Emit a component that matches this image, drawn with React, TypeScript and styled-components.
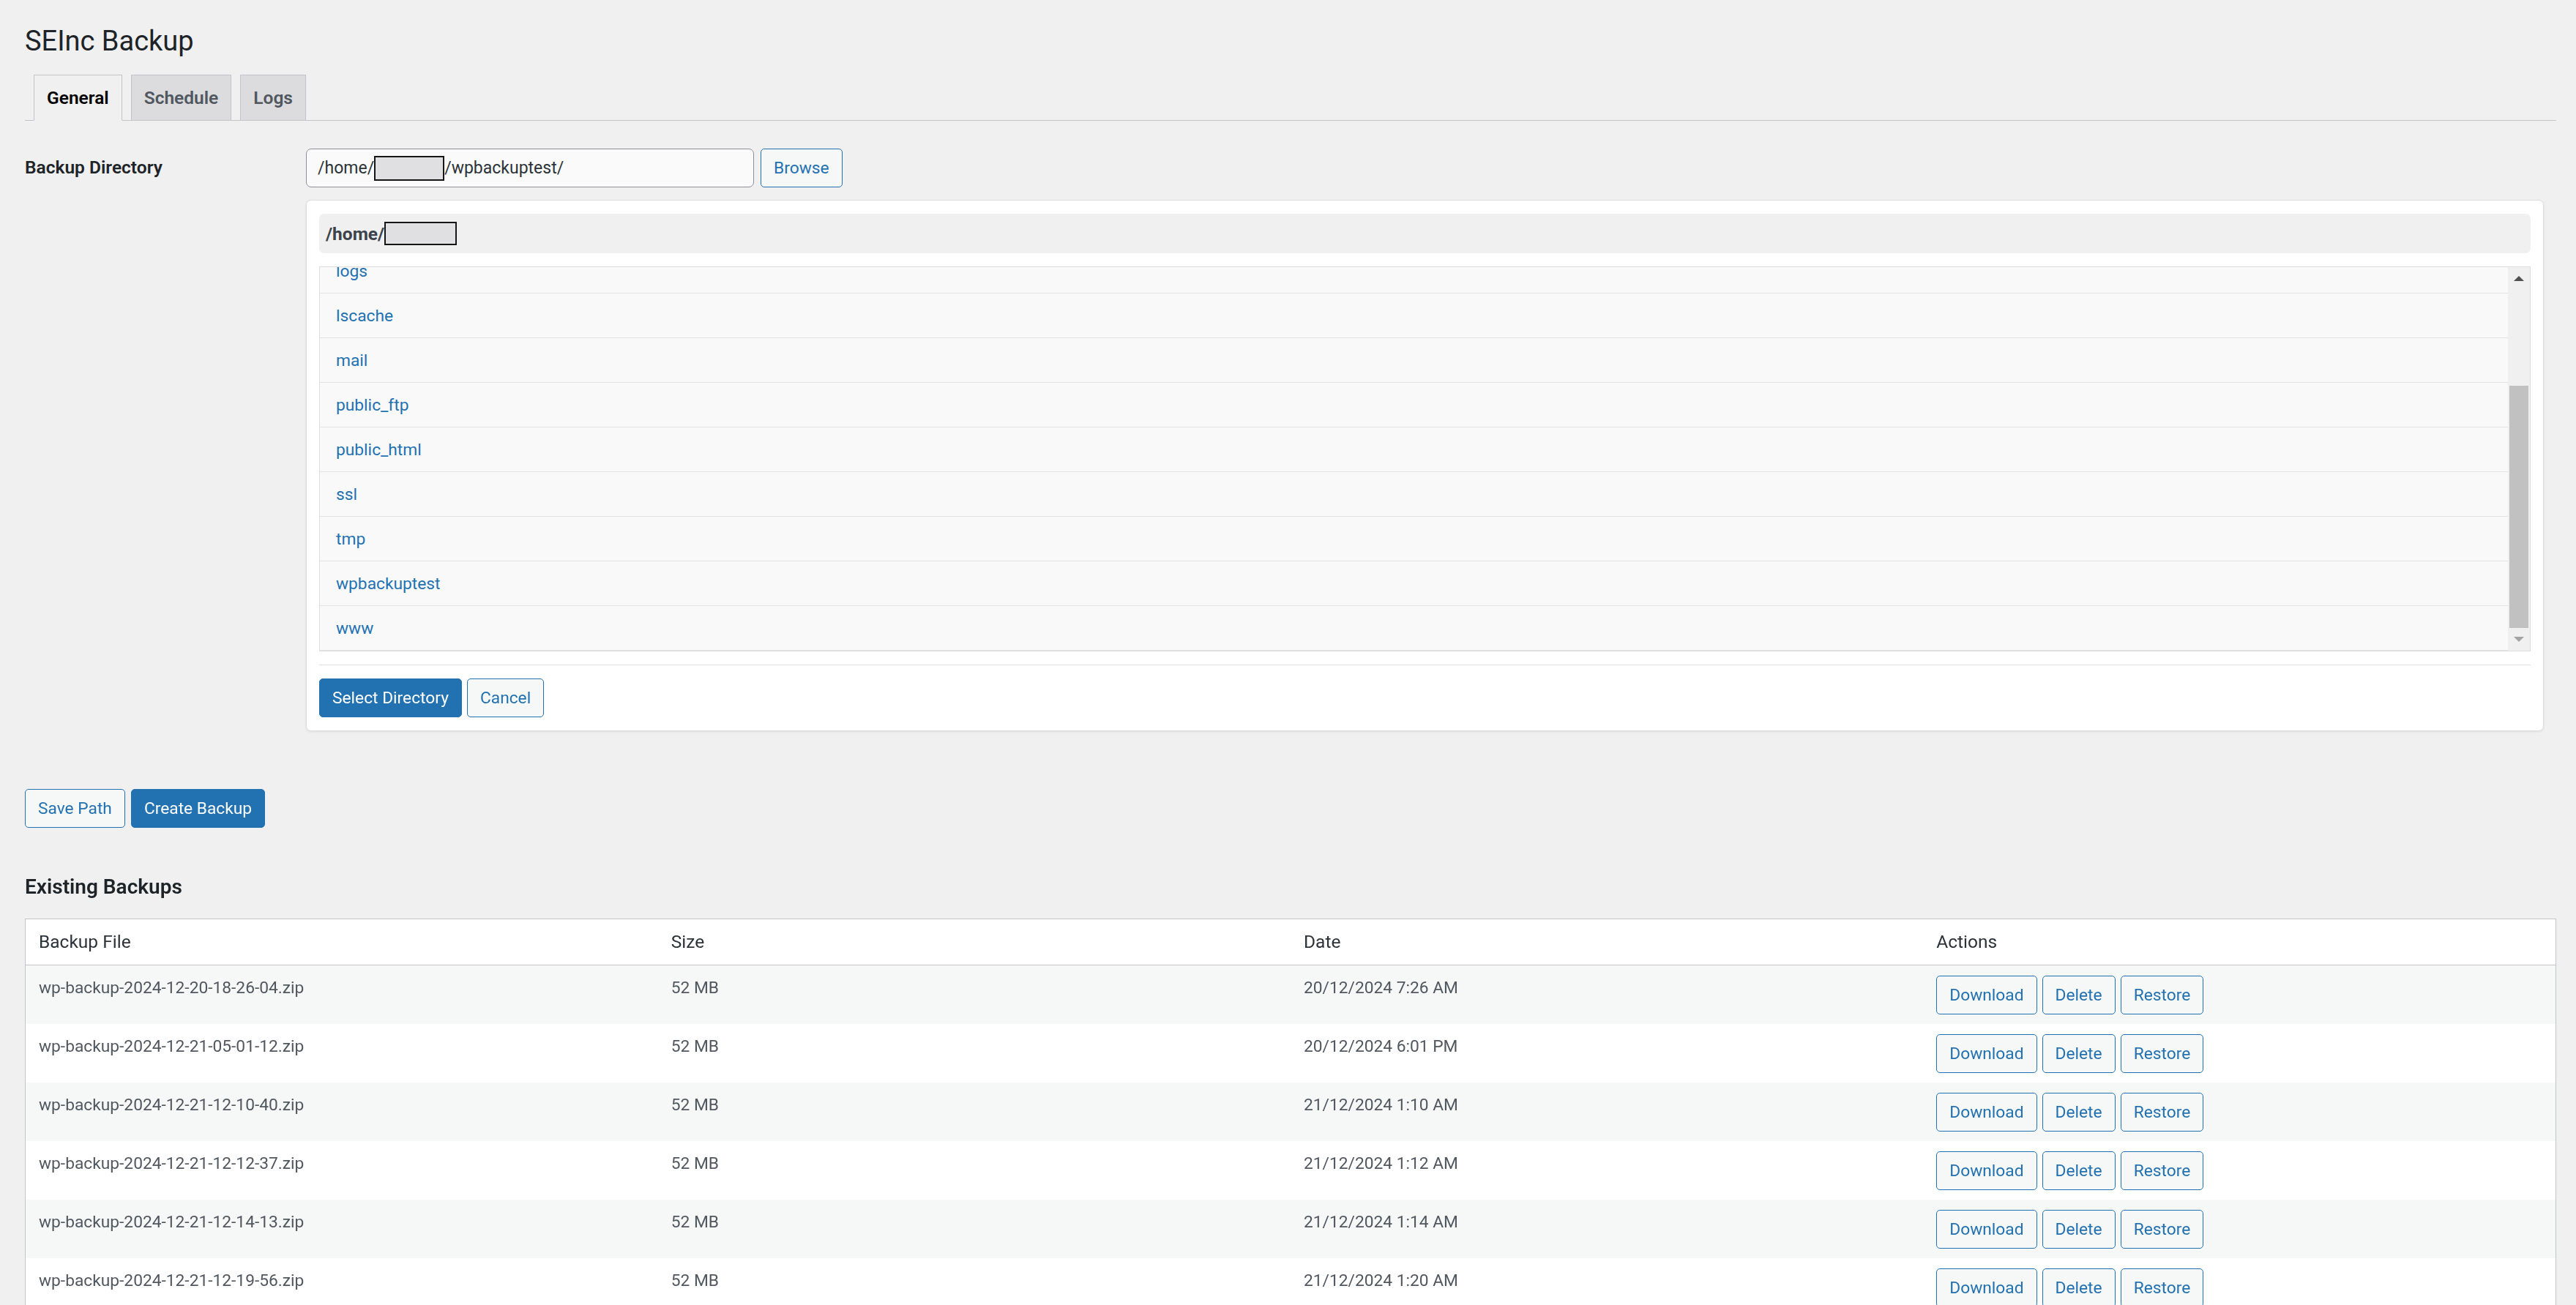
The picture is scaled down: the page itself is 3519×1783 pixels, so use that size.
import React, { useLayoutEffect, useRef } from "react"
import styled, { createGlobalStyle, css } from "styled-components"

const GlobalStyle = createGlobalStyle`
  html, body {
    margin: 0;
    padding: 0;
  }
  body {
    background: #f0f0f1;
    color: #3c434a;
    font-family: -apple-system, BlinkMacSystemFont, "Segoe UI", Roboto, "Helvetica Neue", sans-serif;
    font-size: 22.75px;
  }
  * {
    box-sizing: border-box;
  }
`

const Wrap = styled.div`
  padding: 0 27px 40px 34px;
`

const Title = styled.h1`
  margin: 0;
  padding-top: 32px;
  font-size: 38px;
  font-weight: 400;
  line-height: 49px;
  color: #1d2327;
`

const TabBar = styled.nav`
  display: flex;
  align-items: flex-end;
  margin-top: 21px;
  border-bottom: 1px solid #c3c4c7;
`

const Tab = styled.a<{ $active?: boolean }>`
  margin: 0 0 -1px 12px;
  padding: 9px 17px;
  line-height: 43px;
  font-size: 24.5px;
  font-weight: 600;
  border: 1px solid #c3c4c7;
  background: #dcdcde;
  color: #50575e;
  text-decoration: none;
  cursor: pointer;
  ${(p) =>
    p.$active &&
    css`
      background: #f0f0f1;
      border-bottom-color: #f0f0f1;
      color: #000;
    `}
`

const FormRow = styled.div`
  display: grid;
  grid-template-columns: 367px 1fr;
`

const Label = styled.div`
  padding-top: 48px;
  font-size: 24.5px;
  font-weight: 600;
  line-height: 32px;
  color: #1d2327;
`

const Field = styled.div`
  padding: 38px 17px 0;
`

const InputRow = styled.div`
  display: flex;
  align-items: center;
  gap: 9px;
`

const PathInput = styled.div`
  display: flex;
  align-items: center;
  width: 612px;
  height: 53px;
  padding: 0 15px;
  border: 1px solid #8c8f94;
  border-radius: 7px;
  background: #fafafa;
  color: #2c3338;
  font-size: 23px;
  white-space: nowrap;
`

// grey block hiding the account name in paths
const Redacted = styled.span<{ $w: number; $h: number }>`
  display: inline-block;
  width: ${(p) => p.$w}px;
  height: ${(p) => p.$h}px;
  background: #e0e0e2;
  border: 2px solid #161616;
`

const Button = styled.button<{ $primary?: boolean }>`
  display: inline-flex;
  align-items: center;
  height: 53px;
  padding: 0 17px;
  border: 1px solid #2271b1;
  border-radius: 5px;
  font-family: inherit;
  font-size: 22.75px;
  line-height: 50px;
  white-space: nowrap;
  cursor: pointer;
  background: ${(p) => (p.$primary ? "#2271b1" : "#f6f7f7")};
  color: ${(p) => (p.$primary ? "#fff" : "#2271b1")};
`

const Card = styled.div`
  margin-top: 17px;
  padding: 18px 17px 18px;
  background: #fff;
  border: 1px solid #dcdcde;
  border-radius: 7px;
  box-shadow: 0 1px 3px rgba(0, 0, 0, 0.08);
`

const CurrentPath = styled.div`
  display: flex;
  align-items: center;
  height: 54px;
  padding: 0 9px;
  background: #f0f0f0;
  border-radius: 7px;
  font-size: 24.5px;
  font-weight: 700;
  color: #3c434a;
`

const ListBox = styled.div`
  display: flex;
  height: 526px;
  margin-top: 18px;
  border: 1px solid #dddddd;
  background: #f9f9f9;
`

const ListScroll = styled.div`
  flex: 1;
  overflow-y: auto;
  scrollbar-width: none;
  &::-webkit-scrollbar {
    display: none;
  }
`

const DirRow = styled.div`
  display: flex;
  align-items: center;
  height: 61px;
  padding-left: 22px;
  border-bottom: 1px solid #e3e3e3;
  background: #f9f9f9;
  color: #2271b1;
  font-size: 22.75px;
  cursor: pointer;
`

const ScrollTrack = styled.div`
  display: flex;
  flex-direction: column;
  width: 30px;
  background: #f0f0f0;
`

const ScrollArrow = styled.div<{ $down?: boolean; $dim?: boolean }>`
  display: flex;
  align-items: center;
  justify-content: center;
  height: 31px;
  &::before {
    content: "";
    width: 0;
    height: 0;
    border-left: 7px solid transparent;
    border-right: 7px solid transparent;
    ${(p) =>
      p.$down
        ? css`border-top: 7px solid ${p.$dim ? "#a3a3a3" : "#505050"};`
        : css`border-bottom: 7px solid ${p.$dim ? "#a3a3a3" : "#505050"};`}
  }
`

const ScrollGap = styled.div`
  flex: 1;
`

const ScrollThumb = styled.div`
  margin: 0 2px;
  background: #c1c1c1;
`

const Divider = styled.hr`
  margin: 18px 0 0;
  border: 0;
  border-top: 1px solid #e0e0e0;
`

const ButtonRow = styled.div<{ $gap?: number }>`
  display: flex;
  gap: ${(p) => p.$gap ?? 7}px;
  margin-top: 18px;
`

const SubmitRow = styled(ButtonRow)`
  margin-top: 79px;
`

const SectionTitle = styled.h2`
  margin: 61px 0 0;
  font-size: 28px;
  font-weight: 600;
  line-height: 39px;
  color: #1d2327;
`

const BackupsTable = styled.table`
  width: 100%;
  margin-top: 24px;
  table-layout: fixed;
  border-collapse: collapse;
  border: 1px solid #c3c4c7;
  background: #fff;
`

const HeadCell = styled.th`
  padding: 14px 18px;
  border-bottom: 1px solid #c3c4c7;
  font-size: 24.5px;
  font-weight: 400;
  line-height: 34px;
  text-align: left;
  color: #2c3338;
`

const BodyRow = styled.tr`
  &:nth-child(odd) {
    background: #f6f7f7;
  }
`

const Cell = styled.td`
  padding: 14px 18px 13px;
  vertical-align: top;
  font-size: 22.75px;
  line-height: 34px;
  color: #50575e;
`

const dirs = [
  "cache",
  "etc",
  "lsphp",
  "logs",
  "lscache",
  "mail",
  "public_ftp",
  "public_html",
  "ssl",
  "tmp",
  "wpbackuptest",
  "www",
]

const backups = [
  { file: "wp-backup-2024-12-20-18-26-04.zip", size: "52 MB", date: "20/12/2024 7:26 AM" },
  { file: "wp-backup-2024-12-21-05-01-12.zip", size: "52 MB", date: "20/12/2024 6:01 PM" },
  { file: "wp-backup-2024-12-21-12-10-40.zip", size: "52 MB", date: "21/12/2024 1:10 AM" },
  { file: "wp-backup-2024-12-21-12-12-37.zip", size: "52 MB", date: "21/12/2024 1:12 AM" },
  { file: "wp-backup-2024-12-21-12-14-13.zip", size: "52 MB", date: "21/12/2024 1:14 AM" },
  { file: "wp-backup-2024-12-21-12-19-56.zip", size: "52 MB", date: "21/12/2024 1:20 AM" },
]

const ROW_H = 61
const VIEW_H = 524
const ARROW_H = 31

const DirectoryBrowser = () => {
  const listRef = useRef<HTMLDivElement>(null)

  // the list opens scrolled to the end
  useLayoutEffect(() => {
    const el = listRef.current
    if (el) el.scrollTop = el.scrollHeight
  }, [])

  const contentH = dirs.length * ROW_H
  const thumbH = Math.round((VIEW_H / contentH) * (VIEW_H - ARROW_H * 2))

  return (
    <Card>
      <CurrentPath>
        /home/<Redacted $w={99} $h={32} />
      </CurrentPath>
      <ListBox>
        <ListScroll ref={listRef}>
          {dirs.map((d) => (
            <DirRow key={d}>{d}</DirRow>
          ))}
        </ListScroll>
        <ScrollTrack>
          <ScrollArrow />
          <ScrollGap />
          <ScrollThumb style={{ height: thumbH }} />
          <ScrollArrow $down $dim />
        </ScrollTrack>
      </ListBox>
      <Divider />
      <ButtonRow>
        <Button $primary>Select Directory</Button>
        <Button>Cancel</Button>
      </ButtonRow>
    </Card>
  )
}

const App = () => (
  <>
    <GlobalStyle />
    <Wrap>
      <Title>SEInc Backup</Title>
      <TabBar>
        <Tab $active>General</Tab>
        <Tab>Schedule</Tab>
        <Tab>Logs</Tab>
      </TabBar>

      <FormRow>
        <Label>Backup Directory</Label>
        <Field>
          <InputRow>
            <PathInput>
              /home/<Redacted $w={96} $h={34} />/wpbackuptest/
            </PathInput>
            <Button>Browse</Button>
          </InputRow>
          <DirectoryBrowser />
        </Field>
      </FormRow>

      <SubmitRow $gap={8}>
        <Button>Save Path</Button>
        <Button $primary>Create Backup</Button>
      </SubmitRow>

      <SectionTitle>Existing Backups</SectionTitle>
      <BackupsTable>
        <thead>
          <tr>
            <HeadCell>Backup File</HeadCell>
            <HeadCell>Size</HeadCell>
            <HeadCell>Date</HeadCell>
            <HeadCell>Actions</HeadCell>
          </tr>
        </thead>
        <tbody>
          {backups.map((b) => (
            <BodyRow key={b.file}>
              <Cell>{b.file}</Cell>
              <Cell>{b.size}</Cell>
              <Cell>{b.date}</Cell>
              <Cell>
                <ButtonRow style={{ marginTop: 0 }}>
                  <Button>Download</Button>
                  <Button>Delete</Button>
                  <Button>Restore</Button>
                </ButtonRow>
              </Cell>
            </BodyRow>
          ))}
        </tbody>
      </BackupsTable>
    </Wrap>
  </>
)

export default App
